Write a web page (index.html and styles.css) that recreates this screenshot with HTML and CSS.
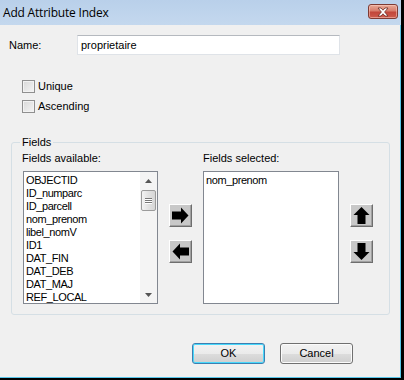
FILE: index.html
```html
<!DOCTYPE html>
<html>
<head>
<meta charset="utf-8">
<link rel="stylesheet" href="styles.css">
</head>
<body>
<div class="window">
  <div class="titlebar">
    <span class="title">Add Attribute Index</span>
    <div class="close">
      <svg width="14" height="10" viewBox="0 0 14 10"><path d="M2 1 L5 1 L7 3.2 L9 1 L12 1 L8.6 5 L12 9 L9 9 L7 6.8 L5 9 L2 9 L5.4 5 Z" fill="#fff" stroke="#6a2a22" stroke-width="0.8" stroke-linejoin="round"/></svg>
    </div>
  </div>
  <div class="client">
    <div class="name-row">
      <span class="name-label">Name:</span>
      <div class="input">proprietaire</div>
    </div>
    <div class="checks">
      <div class="check"><span class="box"></span><span>Unique</span></div>
      <div class="check"><span class="box"></span><span>Ascending</span></div>
    </div>
    <fieldset class="group">
      <legend>Fields</legend>
      <div class="cols">
        <div class="col">
          <div class="cap">Fields available:</div>
          <div class="list">
            <ul class="items">
              <li>OBJECTID</li>
              <li>ID_numparc</li>
              <li>ID_parcell</li>
              <li>nom_prenom</li>
              <li>libel_nomV</li>
              <li>ID1</li>
              <li>DAT_FIN</li>
              <li>DAT_DEB</li>
              <li>DAT_MAJ</li>
              <li>REF_LOCAL</li>
            </ul>
            <div class="sbar">
              <div class="sarrow"><svg width="7" height="4" viewBox="0 0 7 4"><path d="M0 4 L3.5 0 L7 4 Z" fill="#555"/></svg></div>
              <div class="thumb"><span></span><span></span><span></span></div>
              <div class="sfill"></div>
              <div class="sarrow"><svg width="7" height="4" viewBox="0 0 7 4"><path d="M0 0 L7 0 L3.5 4 Z" fill="#555"/></svg></div>
            </div>
          </div>
        </div>
        <div class="btncol">
          <div class="abtn"><svg width="21" height="21" viewBox="0 0 21 21"><path d="M2 6.5 H11 V2.5 L18.5 10.5 L11 18.5 V14.5 H2 Z" fill="#000"/></svg></div>
          <div class="abtn"><svg width="21" height="21" viewBox="0 0 21 21"><path d="M19 6.5 H10 V2.5 L2.5 10.5 L10 18.5 V14.5 H19 Z" fill="#000"/></svg></div>
        </div>
        <div class="col">
          <div class="cap">Fields selected:</div>
          <div class="list sel">
            <ul class="items">
              <li>nom_prenom</li>
            </ul>
          </div>
        </div>
        <div class="btncol">
          <div class="abtn"><svg width="21" height="21" viewBox="0 0 21 21"><path d="M10.5 2 L18.5 10 H14.5 V19 H6.5 V10 H2.5 Z" fill="#000"/></svg></div>
          <div class="abtn"><svg width="21" height="21" viewBox="0 0 21 21"><path d="M10.5 19 L18.5 11 H14.5 V2 H6.5 V11 H2.5 Z" fill="#000"/></svg></div>
        </div>
      </div>
    </fieldset>
    <div class="actions">
      <div class="btn default">OK</div>
      <div class="btn">Cancel</div>
    </div>
  </div>
</div>
</body>
</html>
```
FILE: styles.css
```css
* { box-sizing: border-box; }
html, body { margin: 0; padding: 0; }
body {
  width: 404px;
  height: 380px;
  overflow: hidden;
  font-family: "Liberation Sans", Arial, sans-serif;
  font-size: 11px;
  color: #000;
  background: #000;
}
.window {
  width: 404px;
  height: 380px;
  border-right: 3px solid #000;
  border-bottom: 2px solid #000;
  display: flex;
  flex-direction: column;
  background: #f0f0f0;
}
.titlebar {
  height: 25px;
  flex: none;
  background: linear-gradient(#b9d0ea, #c4d8ee);
  display: flex;
  align-items: flex-start;
  justify-content: space-between;
  padding-left: 3px;
  padding-right: 3px;
}
.title {
  font-family: "Open Sans", "Noto Sans", sans-serif;
  font-size: 12px;
  line-height: 25px;
  color: #000;
  letter-spacing: -0.2px;
}
.close {
  margin-top: 4px;
  width: 30px;
  height: 15px;
  border: 1px solid #7e3b33;
  border-radius: 3px;
  background: linear-gradient(#e8aa97 0%, #d77d6c 45%, #c2463a 55%, #cd5c4d 100%);
  box-shadow: inset 0 0 0 1px rgba(255,210,200,0.5);
  display: flex;
  align-items: center;
  justify-content: center;
}
.close svg { display: block; }
.client {
  flex: 1;
  border-right: 1px solid #58c6ea;
  border-bottom: 1px solid #58c6ea;
  display: flex;
  flex-direction: column;
}
.name-row {
  margin-top: 10px;
  padding-left: 9px;
  display: flex;
  align-items: center;
  height: 20px;
}
.name-label {
  width: 68px;
}
.input {
  width: 263px;
  height: 20px;
  background: #fff;
  border: 1px solid #dfe3e8;
  border-top-color: #b5b9bf;
  padding-left: 3px;
  line-height: 18px;
}
.checks {
  margin-top: 25px;
  padding-left: 22px;
  display: flex;
  flex-direction: column;
  gap: 7px;
}
.check {
  display: flex;
  align-items: center;
  height: 13px;
  line-height: 13px;
}
.box {
  width: 13px;
  height: 13px;
  border: 1px solid #8f8f8f;
  background: linear-gradient(135deg, #d8d8d8, #f4f4f4);
  box-shadow: inset 0 0 0 1px #f2f2f2;
  margin-right: 3px;
}
.group {
  margin: 23px 0 0 11px;
  width: 379px;
  border: 1px solid #d5dfe5;
  border-radius: 3px;
  padding: 3px 15px 10px 10px;
  min-width: 0;
}
.group legend {
  padding: 0 2px;
  margin-left: -2px;
  line-height: 13px;
  height: 13px;
}
.cols {
  display: flex;
  align-items: flex-start;
}
.col {
  display: flex;
  flex-direction: column;
}
.cap {
  line-height: 13px;
  height: 13px;
  margin-bottom: 6px;
}
.list {
  margin-left: 1px;
  width: 135px;
  height: 133px;
  border: 1px solid #828790;
  background: #fff;
  display: flex;
}
.list.sel {
  width: 136px;
  margin-left: 0;
}
.items {
  list-style: none;
  margin: 0;
  padding: 2px 0 0 2px;
  flex: 1;
  letter-spacing: -0.4px;
}
.items li {
  height: 13px;
  line-height: 13px;
}
.sbar {
  width: 17px;
  background: #f4f4f4;
  display: flex;
  flex-direction: column;
  align-items: center;
}
.sarrow {
  height: 17px;
  width: 17px;
  display: flex;
  align-items: center;
  justify-content: center;
  flex: none;
}
.sarrow svg { display: block; }
.thumb {
  margin-top: 1px;
  width: 15px;
  height: 21px;
  border: 1px solid #9b9b9b;
  border-radius: 2px;
  background: linear-gradient(90deg, #f3f3f3, #e2e2e2 50%, #d6d6d6);
  display: flex;
  flex-direction: column;
  align-items: center;
  justify-content: center;
  gap: 1px;
  flex: none;
}
.thumb span {
  width: 7px;
  height: 1px;
  background: #777;
  box-shadow: 0 1px 0 #fff;
}
.sfill { flex: 1; }
.btncol {
  margin: 52px 11px 0 11px;
  display: flex;
  flex-direction: column;
  gap: 13px;
}
.abtn {
  width: 23px;
  height: 23px;
  background: #c8c8c8;
  border: 1px solid;
  border-color: #ffffff #6e6e6e #6e6e6e #ffffff;
  box-shadow: inset -1px -1px 0 #a0a0a0;
  display: flex;
  align-items: center;
  justify-content: center;
}
.abtn svg { display: block; }
.actions {
  margin-top: 28px;
  display: flex;
  justify-content: flex-end;
  gap: 15px;
  padding-right: 47px;
}
.btn {
  width: 73px;
  height: 21px;
  border: 1px solid #707070;
  border-radius: 3px;
  background: linear-gradient(#f2f2f2 0%, #ebebeb 50%, #dddddd 51%, #cfcfcf 100%);
  box-shadow: inset 0 0 0 1px #fbfbfb;
  text-align: center;
  line-height: 19px;
}
.btn.default {
  border-color: #3c7fb1;
  box-shadow: inset 0 0 0 1px #48d8fb;
}
```
